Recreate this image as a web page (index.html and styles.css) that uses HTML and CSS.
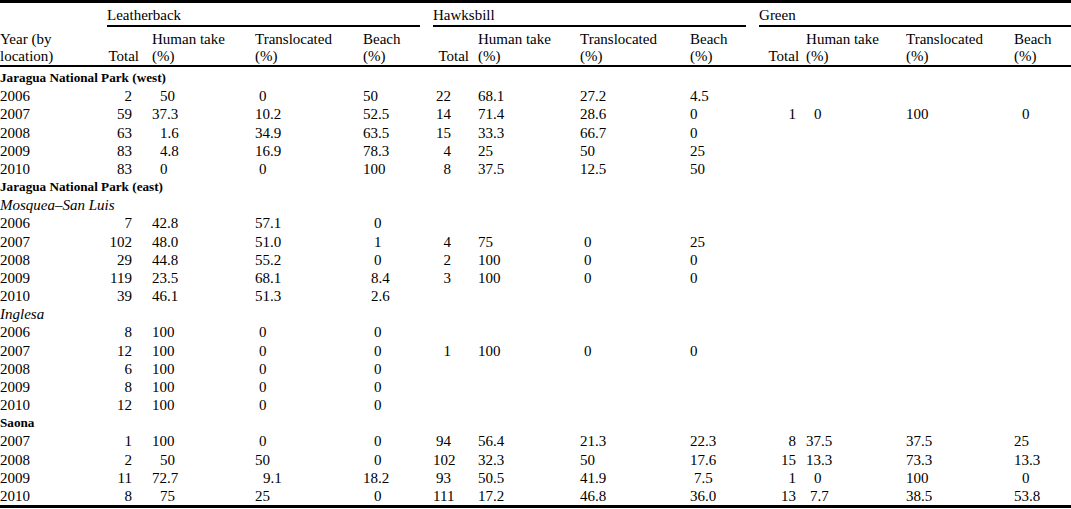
FILE: index.html
```html
<!DOCTYPE html>
<html lang="en">
<head>
<meta charset="utf-8">
<title>Turtle nest fate by location</title>
<link rel="stylesheet" href="styles.css">
</head>
<body>
<main class="page">
<table class="data">
<colgroup>
<col class="c-year"><col class="c-tot1"><col class="c-hum1"><col class="c-tr1"><col class="c-be1">
<col class="c-tot2"><col class="c-hum2"><col class="c-tr2"><col class="c-be2">
<col class="c-tot3"><col class="c-hum3"><col class="c-tr3"><col class="c-be3">
</colgroup>
<thead>
<tr class="groups">
<th></th>
<th colspan="4"><div class="grp g1">Leatherback</div></th>
<th colspan="4"><div class="grp g2">Hawksbill</div></th>
<th colspan="4"><div class="grp g3">Green</div></th>
</tr>
<tr class="cols">
<th>Year (by<br>location)</th>
<th class="ht1">Total</th><th>Human take<br>(%)</th><th>Translocated<br>(%)</th><th>Beach<br>(%)</th>
<th class="ht2">Total</th><th>Human take<br>(%)</th><th>Translocated<br>(%)</th><th>Beach<br>(%)</th>
<th class="ht3">Total</th><th>Human take<br>(%)</th><th>Translocated<br>(%)</th><th>Beach<br>(%)</th>
</tr>
</thead>
<tbody>
<tr class="first"><td class="sec" colspan="13">Jaragua National Park (west)</td></tr>
<tr><td>2006</td><td class="t1">2</td><td class="o2">50</td><td class="o1">0</td><td>50</td><td class="t2">22</td><td>68.1</td><td>27.2</td><td>4.5</td><td class="t3"></td><td></td><td></td><td></td></tr>
<tr><td>2007</td><td class="t1">59</td><td>37.3</td><td>10.2</td><td>52.5</td><td class="t2">14</td><td>71.4</td><td>28.6</td><td>0</td><td class="t3">1</td><td class="o2">0</td><td>100</td><td class="o2">0</td></tr>
<tr><td>2008</td><td class="t1">63</td><td class="o2">1.6</td><td>34.9</td><td>63.5</td><td class="t2">15</td><td>33.3</td><td>66.7</td><td>0</td><td class="t3"></td><td></td><td></td><td></td></tr>
<tr><td>2009</td><td class="t1">83</td><td class="o2">4.8</td><td>16.9</td><td>78.3</td><td class="t2">4</td><td>25</td><td>50</td><td>25</td><td class="t3"></td><td></td><td></td><td></td></tr>
<tr><td>2010</td><td class="t1">83</td><td class="o2">0</td><td class="o1">0</td><td>100</td><td class="t2">8</td><td>37.5</td><td>12.5</td><td>50</td><td class="t3"></td><td></td><td></td><td></td></tr>
<tr><td class="sec" colspan="13">Jaragua National Park (east)</td></tr>
<tr><td class="sub" colspan="13">Mosquea–San Luis</td></tr>
<tr><td>2006</td><td class="t1">7</td><td>42.8</td><td>57.1</td><td class="o3">0</td><td class="t2"></td><td></td><td></td><td></td><td class="t3"></td><td></td><td></td><td></td></tr>
<tr><td>2007</td><td class="t1">102</td><td>48.0</td><td>51.0</td><td class="o3">1</td><td class="t2">4</td><td>75</td><td class="o1">0</td><td>25</td><td class="t3"></td><td></td><td></td><td></td></tr>
<tr><td>2008</td><td class="t1">29</td><td>44.8</td><td>55.2</td><td class="o3">0</td><td class="t2">2</td><td>100</td><td class="o1">0</td><td>0</td><td class="t3"></td><td></td><td></td><td></td></tr>
<tr><td>2009</td><td class="t1">119</td><td>23.5</td><td>68.1</td><td class="o2">8.4</td><td class="t2">3</td><td>100</td><td class="o1">0</td><td>0</td><td class="t3"></td><td></td><td></td><td></td></tr>
<tr><td>2010</td><td class="t1">39</td><td>46.1</td><td>51.3</td><td class="o2">2.6</td><td class="t2"></td><td></td><td></td><td></td><td class="t3"></td><td></td><td></td><td></td></tr>
<tr><td class="sub" colspan="13">Inglesa</td></tr>
<tr><td>2006</td><td class="t1">8</td><td>100</td><td class="o1">0</td><td class="o3">0</td><td class="t2"></td><td></td><td></td><td></td><td class="t3"></td><td></td><td></td><td></td></tr>
<tr><td>2007</td><td class="t1">12</td><td>100</td><td class="o1">0</td><td class="o3">0</td><td class="t2">1</td><td>100</td><td class="o1">0</td><td>0</td><td class="t3"></td><td></td><td></td><td></td></tr>
<tr><td>2008</td><td class="t1">6</td><td>100</td><td class="o1">0</td><td class="o3">0</td><td class="t2"></td><td></td><td></td><td></td><td class="t3"></td><td></td><td></td><td></td></tr>
<tr><td>2009</td><td class="t1">8</td><td>100</td><td class="o1">0</td><td class="o3">0</td><td class="t2"></td><td></td><td></td><td></td><td class="t3"></td><td></td><td></td><td></td></tr>
<tr><td>2010</td><td class="t1">12</td><td>100</td><td class="o1">0</td><td class="o3">0</td><td class="t2"></td><td></td><td></td><td></td><td class="t3"></td><td></td><td></td><td></td></tr>
<tr><td class="sec" colspan="13">Saona</td></tr>
<tr><td>2007</td><td class="t1">1</td><td>100</td><td class="o1">0</td><td class="o3">0</td><td class="t2">94</td><td>56.4</td><td>21.3</td><td>22.3</td><td class="t3">8</td><td>37.5</td><td>37.5</td><td>25</td></tr>
<tr><td>2008</td><td class="t1">2</td><td class="o2">50</td><td>50</td><td class="o3">0</td><td class="t2">102</td><td>32.3</td><td>50</td><td>17.6</td><td class="t3">15</td><td>13.3</td><td>73.3</td><td>13.3</td></tr>
<tr><td>2009</td><td class="t1">11</td><td>72.7</td><td class="o2">9.1</td><td>18.2</td><td class="t2">93</td><td>50.5</td><td>41.9</td><td class="o1">7.5</td><td class="t3">1</td><td class="o2">0</td><td>100</td><td class="o2">0</td></tr>
<tr><td>2010</td><td class="t1">8</td><td class="o2">75</td><td>25</td><td class="o3">0</td><td class="t2">111</td><td>17.2</td><td>46.8</td><td>36.0</td><td class="t3">13</td><td class="o1">7.7</td><td>38.5</td><td>53.8</td></tr>
</tbody>
</table>
</main>
</body>
</html>
```
FILE: styles.css
```css
html, body {
  margin: 0;
  padding: 0;
  background: #ffffff;
}

.page {
  width: 1071px;
}

.data {
  width: 1071px;
  table-layout: fixed;
  border-collapse: separate;
  border-spacing: 0;
  border-top: 3px solid #000;
  border-bottom: 3px solid #000;
  font-family: "Liberation Serif", "Times New Roman", serif;
  font-size: 15px;
  color: #000;
}

.c-year { width: 108px; }
.c-tot1 { width: 44px; }
.c-hum1 { width: 103px; }
.c-tr1 { width: 108px; }
.c-be1 { width: 70px; }
.c-tot2 { width: 45px; }
.c-hum2 { width: 102px; }
.c-tr2 { width: 110px; }
.c-be2 { width: 67px; }
.c-tot3 { width: 49px; }
.c-hum3 { width: 100px; }
.c-tr3 { width: 108px; }
.c-be3 { width: 57px; }

th {
  font-weight: normal;
  text-align: left;
  padding: 0;
}

.groups th {
  padding-top: 2px;
  vertical-align: bottom;
}

.grp {
  line-height: 20px;
  border-bottom: 2px solid #000;
}

.g1 { margin-left: -1px; margin-right: 13px; }
.g2 { margin-right: 11px; }
.g3 { margin-left: 2px; }

.cols th {
  padding-top: 4px;
  line-height: 17px;
  vertical-align: bottom;
  border-bottom: 2px solid #000;
  white-space: nowrap;
}

.cols th.ht1,
.cols th.ht2,
.cols th.ht3 {
  text-align: right;
}

.cols th.ht1 { padding-right: 13px; }
.cols th.ht2 { padding-right: 9px; }
.cols th.ht3 { padding-right: 7px; }

td {
  padding: 0;
  line-height: 18.17px;
  white-space: nowrap;
  text-align: left;
}

.first td {
  padding-top: 2px;
}

td.t1, td.t2, td.t3 {
  text-align: right;
}

td.t1 { padding-right: 20px; }
td.t2 { padding-right: 27px; }
td.t3 { padding-right: 10px; }

.sec {
  font-weight: bold;
  font-size: 13.2px;
}

.sub {
  font-style: italic;
}

.o1 { padding-left: 4px; }
.o2 { padding-left: 8px; }
.o3 { padding-left: 11px; }
```
